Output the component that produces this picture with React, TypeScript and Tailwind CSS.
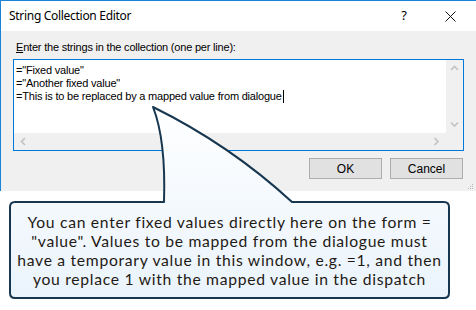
import React from 'react';

const ui = { fontFamily: '"Liberation Sans", Arial, sans-serif' };
const title = { fontFamily: '"Noto Sans", "Open Sans", sans-serif' };
const callout = { fontFamily: 'Lato, "Open Sans", sans-serif' };

const calloutLines = [
  'You can enter fixed values directly here on the form =',
  '"value". Values to be mapped from the dialogue must',
  'have a temporary value in this window, e.g. =1, and then',
  'you replace 1 with the mapped value in the dispatch',
];

function Chevron({ dir }: { dir: 'up' | 'down' | 'left' | 'right' }) {
  const paths: Record<string, string> = {
    up: 'M1 5 L4.5 1.5 L8 5',
    down: 'M1 1.5 L4.5 5 L8 1.5',
    left: 'M5 1 L1.5 4.5 L5 8',
    right: 'M1.5 1 L5 4.5 L1.5 8',
  };
  const vertical = dir === 'up' || dir === 'down';
  return (
    <svg width={vertical ? 9 : 7} height={vertical ? 7 : 9} viewBox={vertical ? '0 0 9 7' : '0 0 7 9'}>
      <path d={paths[dir]} fill="none" stroke="#c2c2c2" strokeWidth="1.6" />
    </svg>
  );
}

export default function App() {
  return (
    <div className="relative w-[476px] h-[310px] bg-white overflow-hidden">
      {/* Dialog window */}
      <div className="w-[476px] h-[191px] border-t border-l border-[#1883d7] flex flex-col">
        {/* Title bar */}
        <div className="h-[30px] bg-white flex items-center pl-[8px] shrink-0">
          <span className="text-[12px] tracking-[-0.3px] text-black" style={title}>String Collection Editor</span>
          <span className="ml-auto w-[46px] text-center text-[13px] text-black" style={title}>?</span>
          <span className="w-[46px] flex justify-center mr-[3px]">
            <svg width="11" height="11" viewBox="0 0 11 11">
              <path d="M0.5 0.5 L10.5 10.5 M10.5 0.5 L0.5 10.5" stroke="#111" strokeWidth="1" />
            </svg>
          </span>
        </div>

        {/* Body */}
        <div className="relative flex-1 bg-[#f0f0f0] pl-[12px]" style={ui}>
          <div className="pt-[10px] pl-[3px] h-[28px] text-[11px] leading-[13px] tracking-[-0.2px] text-black">
            <span className="underline underline-offset-[1px]">E</span>nter the strings in the collection (one per line):
          </div>

          {/* Text box */}
          <div className="w-[451px] h-[92px] border border-[#0078d7] bg-white grid grid-cols-[1fr_17px] grid-rows-[1fr_17px]">
            <div className="pl-[2px] pt-[4px] text-[11px] leading-[13px] tracking-[-0.2px] text-black whitespace-pre">
              <div>="Fixed value"</div>
              <div>="Another fixed value"</div>
              <div className="flex items-center">
                =This is to be replaced by a mapped value from dialogue
                <span className="inline-block w-px h-[13px] bg-black ml-px" />
              </div>
            </div>
            <div className="bg-[#f0f0f0] flex flex-col items-center justify-between py-[5px]">
              <Chevron dir="up" />
              <Chevron dir="down" />
            </div>
            <div className="bg-[#f0f0f0] flex items-center justify-between px-[6px]">
              <Chevron dir="left" />
              <Chevron dir="right" />
            </div>
            <div className="bg-[#f0f0f0]" />
          </div>

          {/* Buttons */}
          <div className="flex justify-end gap-[8px] pr-[13px] pt-[7px]">
            <button className="w-[73px] h-[21px] bg-[#e1e1e1] border border-[#adadad] text-[12px] text-black">OK</button>
            <button className="w-[73px] h-[21px] bg-[#e1e1e1] border border-[#adadad] text-[12px] text-black">Cancel</button>
          </div>

          {/* Size grip */}
          <svg className="absolute right-[2px] bottom-[1px]" width="7" height="7" viewBox="0 0 7 7">
            <rect x="5" y="1" width="1" height="1" fill="#b8b8b8" />
            <rect x="3" y="3" width="1" height="1" fill="#b8b8b8" />
            <rect x="5" y="3" width="1" height="1" fill="#b8b8b8" />
            <rect x="1" y="5" width="1" height="1" fill="#b8b8b8" />
            <rect x="3" y="5" width="1" height="1" fill="#b8b8b8" />
            <rect x="5" y="5" width="1" height="1" fill="#b8b8b8" />
          </svg>
        </div>
      </div>

      {/* Callout shape */}
      <svg className="absolute inset-0 z-10 pointer-events-none" width="476" height="310" viewBox="0 0 476 310">
        <defs>
          <linearGradient id="calloutFill" x1="0" y1="0" x2="0" y2="1">
            <stop offset="0" stopColor="#ffffff" />
            <stop offset="1" stopColor="#eaf3fc" />
          </linearGradient>
        </defs>
        <path
          d="M15 202 L164 202 Q166 140 153 107 Q230 145 292 202 L444 202 Q449 202 449 207 L449 293 Q449 298 444 298 L15 298 Q10 298 10 293 L10 207 Q10 202 15 202 Z"
          fill="url(#calloutFill)"
          stroke="#17364f"
          strokeWidth="2"
          strokeLinejoin="round"
        />
      </svg>

      {/* Callout text */}
      <div
        className="relative z-20 ml-[10px] mt-[12px] w-[439px] h-[96px] flex flex-col items-center justify-center text-[15.7px] tracking-[0.7px] text-[#1f1a14]"
        style={callout}
      >
        {calloutLines.map((line) => (
          <div key={line} className="h-[19px] leading-[19px] whitespace-nowrap">
            {line}
          </div>
        ))}
      </div>
    </div>
  );
}
